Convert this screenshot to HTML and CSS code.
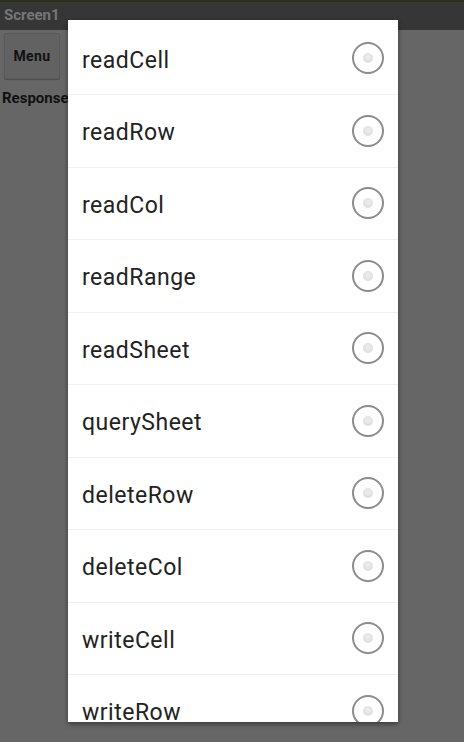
FILE: index.html
```html
<!DOCTYPE html>
<html lang="en">
<head>
    <meta charset="UTF-8">
    <title>Screen1</title>
    <link rel="stylesheet" href="styles.css">
</head>
<body>
    <div class="titlebar">Screen1</div>
    <div class="screen">
        <button class="menu-btn">Menu</button>
        <p class="response">Response</p>
    </div>
    <div class="dialog">
        <ul class="choices">
            <li><span>readCell</span><i class="radio"></i></li>
            <li><span>readRow</span><i class="radio"></i></li>
            <li><span>readCol</span><i class="radio"></i></li>
            <li><span>readRange</span><i class="radio"></i></li>
            <li><span>readSheet</span><i class="radio"></i></li>
            <li><span>querySheet</span><i class="radio"></i></li>
            <li><span>deleteRow</span><i class="radio"></i></li>
            <li><span>deleteCol</span><i class="radio"></i></li>
            <li><span>writeCell</span><i class="radio"></i></li>
            <li><span>writeRow</span><i class="radio"></i></li>
        </ul>
    </div>
</body>
</html>
```

FILE: styles.css
```css
* {
    margin: 0;
    padding: 0;
    box-sizing: border-box;
}

html,
body {
    width: 464px;
    height: 742px;
    overflow: hidden;
    font-family: Roboto, "Liberation Sans", Arial, sans-serif;
}

body {
    background: #666;
}

.titlebar {
    height: 30px;
    background: #363636;
    border-top: 2px solid #2b3018;
    color: #767676;
    font-weight: bold;
    font-size: 15px;
    line-height: 26px;
    padding-left: 4px;
}

.screen {
    padding: 3px 4px;
}

.menu-btn {
    display: block;
    width: 56px;
    height: 46px;
    background: #626262;
    border: 1px solid #5a5a5a;
    border-radius: 2px;
    box-shadow: 0 1px 1px rgba(0, 0, 0, 0.25);
    font-family: Roboto, "Liberation Sans", Arial, sans-serif;
    font-size: 14px;
    font-weight: bold;
    letter-spacing: 0.4px;
    color: #111;
}

.response {
    margin-top: 10px;
    margin-left: -2px;
    font-size: 15px;
    font-weight: bold;
    color: #111;
}

.dialog {
    position: absolute;
    left: 68px;
    top: 20px;
    width: 330px;
    height: 702px;
    background: #fff;
    overflow: hidden;
    box-shadow: 0 2px 5px rgba(0, 0, 0, 0.45);
}

.choices {
    list-style: none;
    padding-top: 2.5px;
}

.choices li {
    height: 72.5px;
    display: flex;
    align-items: center;
    justify-content: space-between;
    padding: 0 14px 0 14px;
    border-bottom: 1px solid #f0f0f0;
    font-size: 23px;
    letter-spacing: 0.5px;
    color: #222;
}

.choices li span {
    position: relative;
    top: 2px;
}

.radio {
    width: 32px;
    height: 32px;
    border: 2px solid #8c8c8c;
    border-radius: 50%;
    display: flex;
    align-items: center;
    justify-content: center;
}

.radio::after {
    content: "";
    width: 10px;
    height: 10px;
    border-radius: 50%;
    background: radial-gradient(circle at 50% 40%, #eee, #d8d8d8);
}
```
